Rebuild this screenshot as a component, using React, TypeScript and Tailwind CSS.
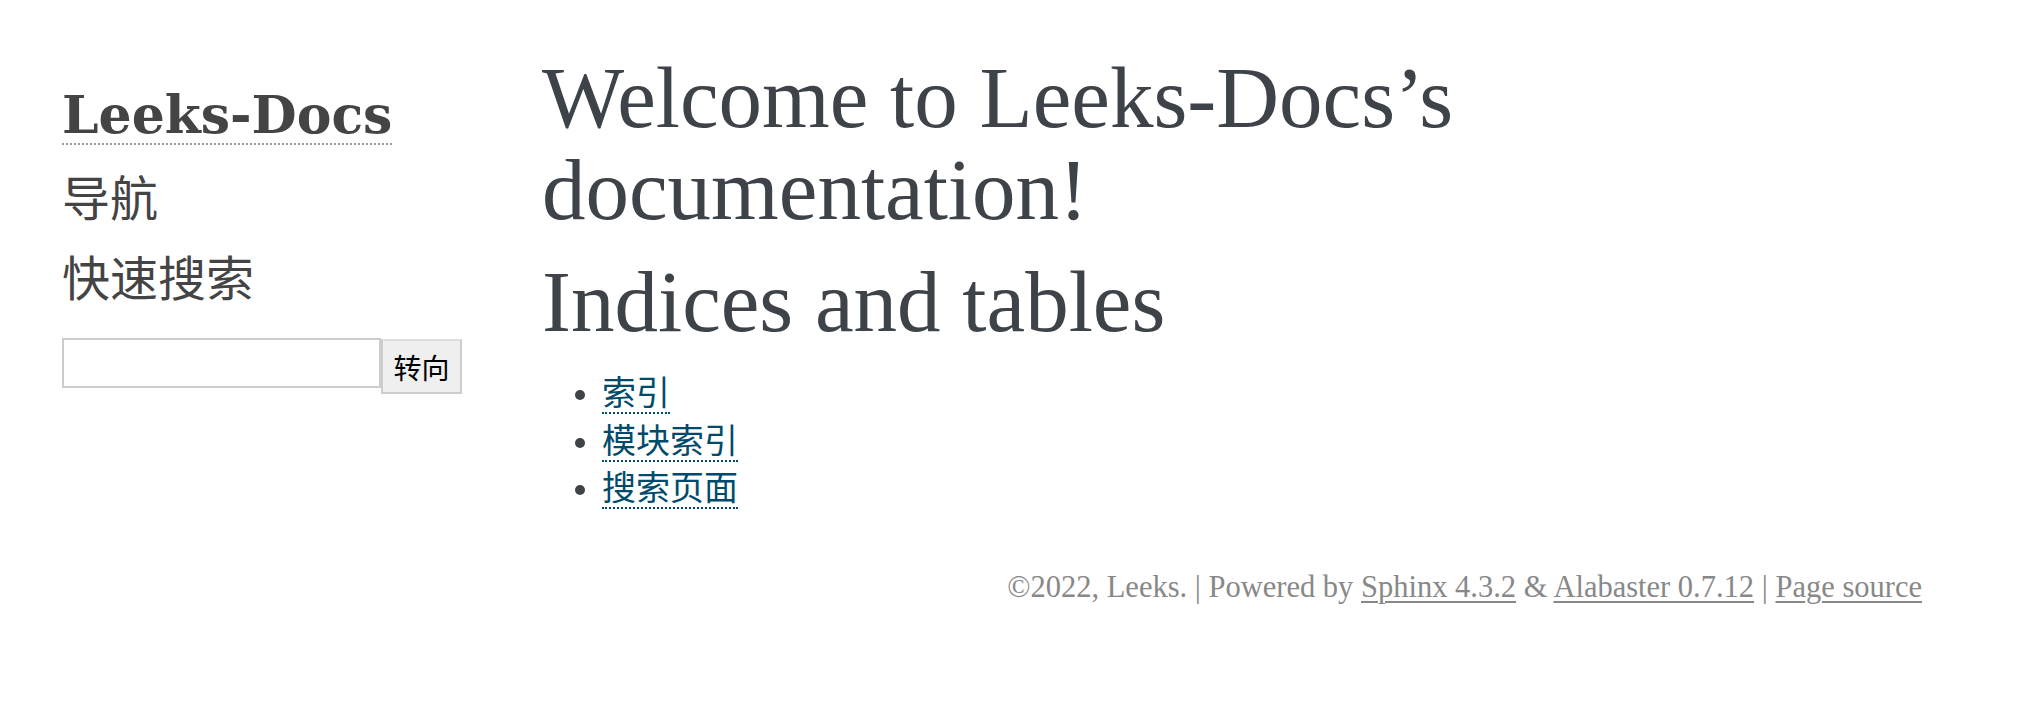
import React from "react";

const serif = "font-['Liberation_Serif','Noto_Sans_CJK_SC',serif]";

const indexLinks = ["索引", "模块索引", "搜索页面"];

function Sidebar() {
  return (
    <aside className="w-[440px] shrink-0 px-[20px] pt-[87px]">
      {/* logo */}
      <h1 className="w-fit border-b-2 border-dotted border-[#999] font-['DejaVu_Serif',serif] text-[52px] font-bold leading-[56px] text-[#444]">
        Leeks-Docs
      </h1>

      <h3 className={`${serif} mt-[19px] text-[48px] leading-[72px] text-[#444]`}>导航</h3>

      <div role="search">
        <h3 className={`${serif} mt-[8px] text-[48px] leading-[72px] text-[#444]`}>快速搜索</h3>
        <form className="mt-[22px] flex items-start">
          <input
            type="text"
            aria-labelledby="searchlabel"
            className="box-border h-[50px] w-[319px] border-2 border-[#ccc] bg-white outline-none"
          />
          <button
            type="button"
            className="mt-px box-border h-[55px] w-[81px] border-2 border-[#ccc] border-t-[#ddd] bg-[#efefef] font-['Noto_Sans_CJK_SC',sans-serif] text-[28px] leading-none text-black"
          >
            转向
          </button>
        </form>
      </div>
    </aside>
  );
}

function Body() {
  return (
    <main className={`${serif} flex-1 pl-[60px] pr-[60px] pt-[52px] text-[#3E4349]`}>
      <h1 className="mb-[20px] text-[87px] font-normal leading-[92px]">
        Welcome to Leeks-Docs’s documentation!
      </h1>
      <h1 className="mb-[22px] text-[87px] font-normal leading-[92px]">Indices and tables</h1>
      <ul className="list-disc pl-[60px] text-[34px] leading-[47.6px]">
        {indexLinks.map((t) => (
          <li key={t}>
            <a href="#" className="border-b-2 border-dotted border-[#004B6B] text-[#004B6B]">
              {t}
            </a>
          </li>
        ))}
      </ul>
    </main>
  );
}

export default function App() {
  return (
    <div className="min-h-screen bg-white">
      <div className="ml-[42px] w-[1880px]">
        <div className="flex">
          <Sidebar />
          <Body />
        </div>

        <footer className={`${serif} mt-[54px] text-right text-[30.5px] leading-[40px] text-[#888]`}>
          ©2022, Leeks. | Powered by{" "}
          <a href="#" className="underline decoration-2 underline-offset-[4px]">
            Sphinx 4.3.2
          </a>{" "}
          &amp;{" "}
          <a href="#" className="underline decoration-2 underline-offset-[4px]">
            Alabaster 0.7.12
          </a>{" "}
          |{" "}
          <a href="#" className="underline decoration-2 underline-offset-[4px]">
            Page source
          </a>
        </footer>
      </div>
    </div>
  );
}
